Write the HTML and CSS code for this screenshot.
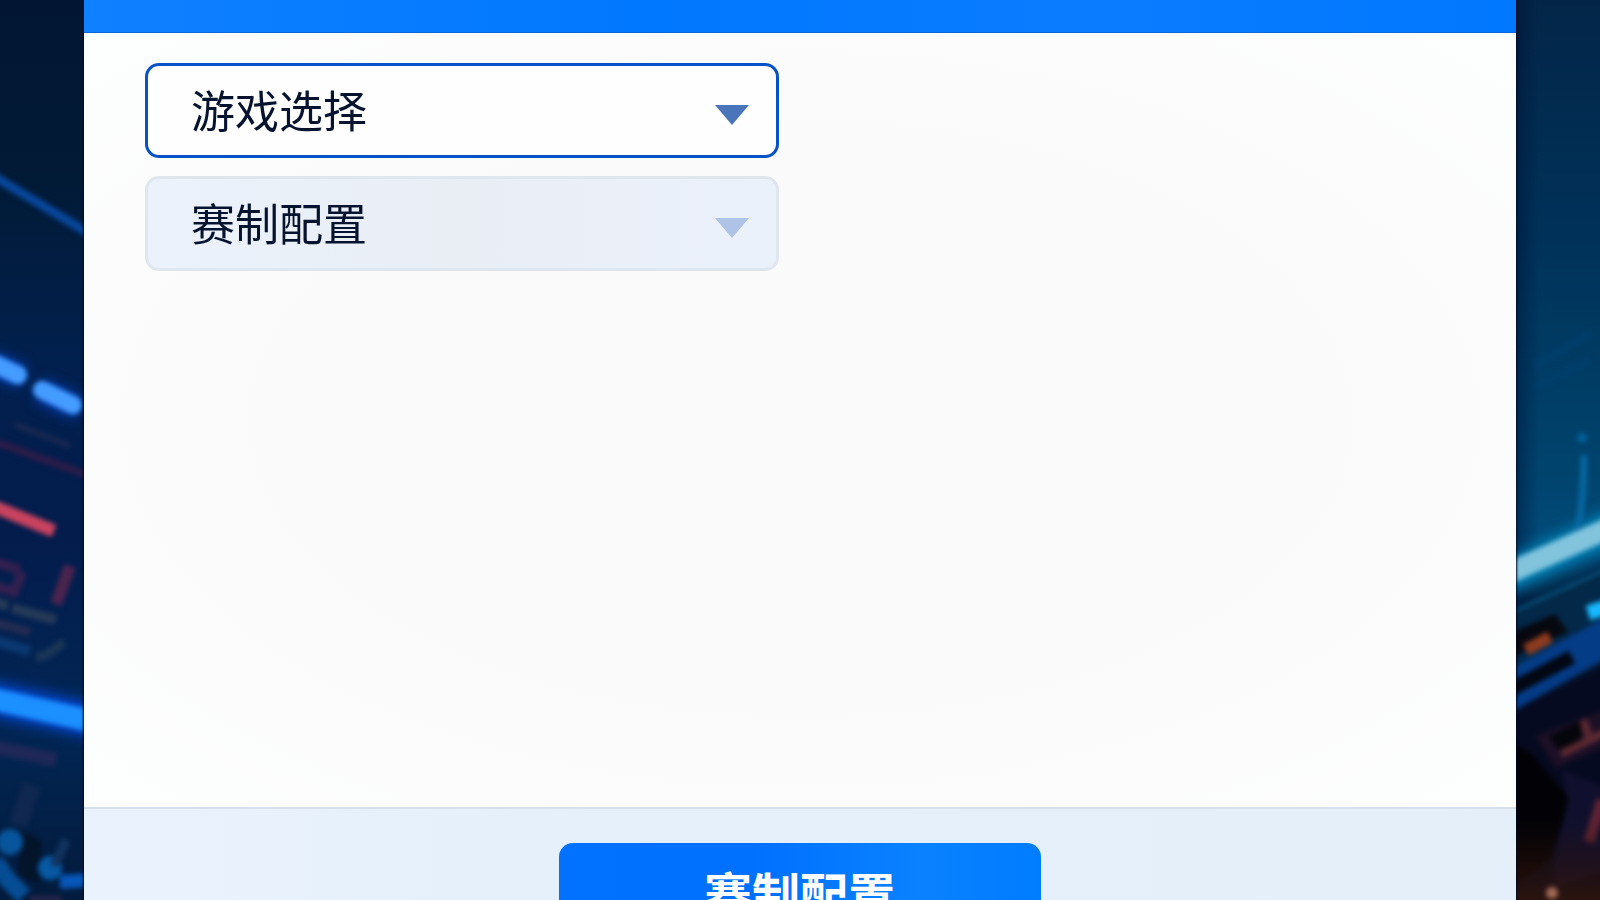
FILE: index.html
```html
<!DOCTYPE html>
<html lang="zh-CN">
<head>
    <meta charset="UTF-8">
    <meta name="viewport" content="width=device-width, initial-scale=1.0">
    <title>赛制配置</title>
    <link rel="stylesheet" href="styles.css">
</head>
<body>
    <svg class="backdrop" viewBox="0 0 1600 900" preserveAspectRatio="xMidYMid slice" aria-hidden="true">
        <defs>
            <linearGradient id="leftSky" x1="0" y1="0" x2="0" y2="1">
                <stop offset="0" stop-color="#021633"/>
                <stop offset="0.2" stop-color="#011a36"/>
                <stop offset="0.4" stop-color="#02204e"/>
                <stop offset="0.6" stop-color="#031c4c"/>
                <stop offset="0.8" stop-color="#022655"/>
                <stop offset="1" stop-color="#031b3c"/>
            </linearGradient>
            <linearGradient id="rightSky" x1="0" y1="0" x2="0" y2="1">
                <stop offset="0" stop-color="#032648"/>
                <stop offset="0.25" stop-color="#003158"/>
                <stop offset="0.5" stop-color="#00426b"/>
                <stop offset="0.6" stop-color="#014a78"/>
                <stop offset="0.66" stop-color="#02284a"/>
                <stop offset="0.8" stop-color="#05081c"/>
                <stop offset="0.9" stop-color="#08060e"/>
                <stop offset="1" stop-color="#2a1008"/>
            </linearGradient>
            <linearGradient id="edge" x1="0" y1="0" x2="1" y2="0">
                <stop offset="0" stop-color="#000c30" stop-opacity="0.4"/>
                <stop offset="1" stop-color="#000c30" stop-opacity="0"/>
            </linearGradient>
            <linearGradient id="ember" x1="0" y1="0" x2="0" y2="1">
                <stop offset="0" stop-color="#2b1109" stop-opacity="0"/>
                <stop offset="1" stop-color="#32160c"/>
            </linearGradient>
            <filter id="soft" x="-50%" y="-50%" width="200%" height="200%" color-interpolation-filters="sRGB"><feGaussianBlur stdDeviation="2.5"/></filter>
            <filter id="glow" x="-50%" y="-50%" width="200%" height="200%" color-interpolation-filters="sRGB"><feGaussianBlur stdDeviation="7"/></filter>
        </defs>

        <rect width="800" height="900" fill="url(#leftSky)"/>
        <rect x="800" width="800" height="900" fill="url(#rightSky)"/>
        <rect x="1517" width="22" height="900" fill="url(#edge)"/>

        <!-- left side lights -->
        <g filter="url(#glow)" fill="none" stroke="#0048d8">
            <path d="M-20 360 L22 376 M40 390 L78 408" stroke-width="20"/>
            <path d="M-20 696 L100 722" stroke-width="32"/>
        </g>
        <g filter="url(#soft)" fill="none">
            <path d="M-10 174 L90 234" stroke="#07479c" stroke-width="9"/>
            <path d="M-20 357 L18 375" stroke="#459cff" stroke-width="18" stroke-linecap="round"/>
            <path d="M42 390 L73 405" stroke="#459cff" stroke-width="18" stroke-linecap="round"/>
            <path d="M-10 440 L90 476" stroke="#2f1c48" stroke-width="7"/>
            <path d="M14 424 L70 446" stroke="#182850" stroke-width="6"/>
            <path d="M-10 505 L54 531" stroke="#c9435f" stroke-width="13"/>
            <path d="M-10 560 L20 570 M22 572 L14 592 L-10 584" stroke="#33204f" stroke-width="10"/>
            <path d="M70 566 L56 604" stroke="#4b244e" stroke-width="12"/>
            <path d="M-8 601 L8 606 M12 608 L56 620" stroke="#263a58" stroke-width="10"/>
            <path d="M-8 622 L30 632" stroke="#242c52" stroke-width="9"/>
            <path d="M-8 640 L30 651" stroke="#0a3870" stroke-width="11"/>
            <path d="M36 658 L48 654 L64 642" stroke="#1a3656" stroke-width="9"/>
            <path d="M-20 696 L100 723" stroke="#1c90ff" stroke-width="22"/>
            <path d="M-10 746 L56 760" stroke="#1f2858" stroke-width="14"/>
            <path d="M32 785 L18 825" stroke="#102850" stroke-width="18"/>
            <path d="M20 830 L42 840 L40 884 L18 876 Z" fill="#03142b"/>
            <circle cx="10" cy="842" r="13" fill="#07559c"/>
            <circle cx="50" cy="868" r="12" fill="#0759a4"/>
            <path d="M-5 862 L8 880 L24 896" stroke="#064c94" stroke-width="18"/>
            <path d="M66 840 L54 866" stroke="#133460" stroke-width="9"/>
            <path d="M60 882 L90 880" stroke="#0756b8" stroke-width="14"/>
            <path d="M30 899 L62 899" stroke="#2d2850" stroke-width="5"/>
        </g>

        <!-- right side lights -->
        <path d="M1500 580 L1620 524" filter="url(#glow)" stroke="#0080b4" stroke-width="34"/>
        <g filter="url(#soft)" fill="none">
            <path d="M1535 366 L1590 334 M1535 388 L1590 360" stroke="#003e6c" stroke-width="8"/>
            <circle cx="1582" cy="438" r="5" fill="#00609a"/>
            <path d="M1584 455 Q1584 495 1578 530" stroke="#0667a0" stroke-width="7"/>
            <path d="M1510 615 L1610 562 L1610 640 L1510 690 Z" fill="#032848"/>
            <path d="M1510 613 L1610 568" stroke="#075682" stroke-width="3"/>
            <path d="M1510 633 L1555 614 L1568 632 L1510 658 Z" fill="#07080f"/>
            <path d="M1526 650 L1550 637" stroke="#8e3b1e" stroke-width="12"/>
            <path d="M1510 669 L1610 615 L1610 656 L1510 713 Z" fill="#043c86"/>
            <path d="M1510 690 L1572 657" stroke="#020713" stroke-width="14"/>
            <path d="M1588 613 L1610 606" stroke="#16b8ff" stroke-width="15"/>
            <path d="M1510 714 L1610 664 V910 H1510 Z" fill="#060a20"/>
            <path d="M1536 736 L1610 708 L1610 744 L1556 768 Z" fill="#1c1026"/>
            <path d="M1549 736 L1582 720 L1580 742 L1560 752 Z" fill="#05050c"/>
            <path d="M1561 754 L1610 730 M1583 720 L1589 736" stroke="#5a2830" stroke-width="8"/>
            <path d="M1510 742 L1530 752 L1570 798 L1550 860 L1510 890 Z" fill="#020206"/>
            <path d="M1562 770 L1610 790 L1610 870 L1550 890 L1568 800 Z" fill="#10102e"/>
            <path d="M1602 800 L1589 842" stroke="#5e2234" stroke-width="11"/>
            <path d="M1500 820 H1620 V915 H1500 Z" fill="url(#ember)"/>
            <circle cx="1552" cy="893" r="6" fill="#a36a57"/>
            <path d="M1500 577 L1620 523" stroke="#82c4dc" stroke-width="21"/>
        </g>
    </svg>

    <div class="panel">
        <header class="panel-header"></header>

        <main class="panel-body">
            <div class="dropdown">
                <select class="dropdown-select" aria-label="游戏选择">
                    <option>游戏选择</option>
                </select>
                <svg class="dropdown-arrow" viewBox="0 0 34 20" aria-hidden="true"><path d="M0 0H34L17 20Z"/></svg>
            </div>
            <div class="dropdown">
                <select class="dropdown-select" aria-label="赛制配置" disabled>
                    <option>赛制配置</option>
                </select>
                <svg class="dropdown-arrow" viewBox="0 0 34 20" aria-hidden="true"><path d="M0 0H34L17 20Z"/></svg>
            </div>
        </main>

        <footer class="panel-footer">
            <button class="submit-button" type="button">赛制配置</button>
        </footer>
    </div>
</body>
</html>
```

FILE: styles.css
```css
:root {
    --primary-color: #0078ff;
    --border-color: #0852c8;
    --text-color: #06132f;
    --border-radius: 14px;
}

* {
    box-sizing: border-box;
}

body {
    margin: 0;
    height: 100vh;
    overflow: hidden;
    font-family: "Noto Sans CJK SC", "Noto Sans", sans-serif;
    color: var(--text-color);
    background: #021633;
}

.backdrop {
    position: fixed;
    inset: 0;
    width: 100%;
    height: 100%;
}

.panel {
    position: relative;
    display: flex;
    flex-direction: column;
    height: calc(100vh + 80px);
    margin: 0 84px;
    background: #fcfdfd;
    box-shadow: 0 0 2px 1px #020a26;
}

.panel-header {
    height: 33px;
    background: linear-gradient(90deg, #0f80ff, var(--primary-color) 40%, #0a7cff 70%, var(--primary-color));
    border-bottom: 1px solid #0868d8;
}

.panel-body {
    flex: 1;
    display: flex;
    flex-direction: column;
    gap: 18px;
    padding: 30px 61px;
    background: radial-gradient(ellipse at center, #fafafb 50%, #fdfefe 100%);
}

.dropdown {
    position: relative;
    width: 634px;
    max-width: 100%;
}

.dropdown-select {
    display: block;
    width: 100%;
    height: 95px;
    padding: 0 80px 3px 43px;
    appearance: none;
    border: 3px solid var(--border-color);
    border-radius: var(--border-radius);
    background: #fefefe;
    color: var(--text-color);
    font-family: inherit;
    font-size: 44px;
    cursor: pointer;
}

.dropdown-select:disabled {
    border-color: #e0e6ee;
    background: linear-gradient(90deg, #ebf2fb, #e9eef5 50%, #ebf1fb);
    color: var(--text-color);
    opacity: 1;
    cursor: default;
}

/* the arrow lies over the select */
.dropdown-arrow {
    position: absolute;
    top: 42px;
    right: 30px;
    width: 34px;
    height: 20px;
    fill: #4a75bb;
    pointer-events: none;
}

.dropdown-select:disabled + .dropdown-arrow {
    fill: #aec3e6;
}

.panel-footer {
    display: flex;
    justify-content: center;
    height: 173px;
    padding-top: 34px;
    border-top: 2px solid #d7e0ea;
    background: linear-gradient(90deg, #eaf2fd, #e5f0fb 30%, #e5effa);
}

.submit-button {
    width: 482px;
    height: 105px;
    padding: 0 0 8px;
    border: none;
    border-radius: var(--border-radius);
    background: linear-gradient(90deg, #0072ff, #0070ff 40%, #0a82ff 75%, #007cff);
    color: #fff;
    font-family: inherit;
    font-size: 48px;
    font-weight: 700;
    cursor: pointer;
}
```
